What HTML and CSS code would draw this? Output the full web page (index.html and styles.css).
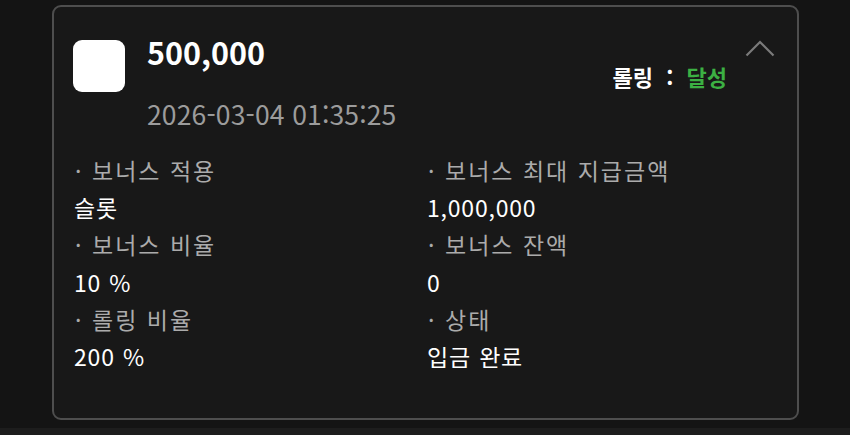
FILE: index.html
```html
<!DOCTYPE html>
<html lang="ko">
<head>
<meta charset="UTF-8">
<meta name="viewport" content="width=device-width, initial-scale=1.0">
<title>보너스 내역</title>
<link rel="stylesheet" href="styles.css">
</head>
<body>

<div class="page">
    <div class="bonus-card">
        <div class="card-head">
            <div class="bonus-icon"></div>
            <div class="head-main">
                <div class="amount">500,000</div>
                <div class="date">2026-03-04 01:35:25</div>
            </div>
            <div class="head-side">
                <button class="toggle" type="button">
                    <svg width="30" height="18" viewBox="0 0 30 18">
                        <path d="M1.5 16.5 L15 3 L28.5 16.5" fill="none" stroke="#7a7a7a" stroke-width="2.2"/>
                    </svg>
                </button>
                <div class="rolling">롤링 : <span class="done">달성</span></div>
            </div>
        </div>

        <div class="info-grid">
            <div class="info">
                <div class="label"><span class="dot">·</span>보너스 적용</div>
                <div class="value">슬롯</div>
            </div>
            <div class="info">
                <div class="label"><span class="dot">·</span>보너스 최대 지급금액</div>
                <div class="value">1,000,000</div>
            </div>
            <div class="info">
                <div class="label"><span class="dot">·</span>보너스 비율</div>
                <div class="value">10 %</div>
            </div>
            <div class="info">
                <div class="label"><span class="dot">·</span>보너스 잔액</div>
                <div class="value">0</div>
            </div>
            <div class="info">
                <div class="label"><span class="dot">·</span>롤링 비율</div>
                <div class="value">200 %</div>
            </div>
            <div class="info">
                <div class="label"><span class="dot">·</span>상태</div>
                <div class="value">입금 완료</div>
            </div>
        </div>
    </div>
</div>
<div class="bottom-bar"></div>

</body>
</html>
```

FILE: styles.css
```css
body {
    margin: 0;
    background-color: #141414;
    font-family: "Noto Sans CJK KR", "Noto Sans", sans-serif;
    color: #ffffff;
}

.page {
    padding: 5px 51px 8px 52px;
}

.bonus-card {
    height: 411px;
    border: 2px solid #4e4e4e;
    border-radius: 9px;
    background-color: #181818;
    padding: 0 22px 0 19px;
}

.card-head {
    display: flex;
    padding-top: 33px;
}

.bonus-icon {
    width: 52px;
    height: 52px;
    border-radius: 9px;
    background-color: #ffffff;
    flex-shrink: 0;
}

.head-main {
    margin-left: 22px;
    flex: 1;
}

.amount {
    font-size: 30.5px;
    font-weight: 700;
    line-height: 30px;
    margin-top: -3px;
}

.date {
    font-size: 26.5px;
    color: #9c9c9c;
    line-height: 30px;
    margin-top: 32px;
    letter-spacing: 0.15px;
}

.head-side {
    display: flex;
    flex-direction: column;
    align-items: flex-end;
}

.toggle {
    background: none;
    border: none;
    padding: 0;
    margin-top: -1px;
    cursor: pointer;
}

.toggle svg {
    display: block;
}

.rolling {
    font-size: 22px;
    font-weight: 700;
    word-spacing: 7px;
    margin-top: 3px;
    margin-right: 48px;
}

.done {
    color: #3cb043;
}

.info-grid {
    display: grid;
    grid-template-columns: 353px 1fr;
    margin-top: 23px;
    padding-left: 1px;
}

.label,
.value {
    font-size: 23px;
    line-height: 37.2px;
}

.label {
    color: #ababab;
    letter-spacing: 2px;
}

/* bullet in front of each label */
.dot {
    display: inline-block;
    width: 17px;
    margin-left: 1px;
}

.value {
    letter-spacing: 0.8px;
    word-spacing: 1px;
}

.bottom-bar {
    height: 7px;
    background-color: #1d1d1d;
}
```
